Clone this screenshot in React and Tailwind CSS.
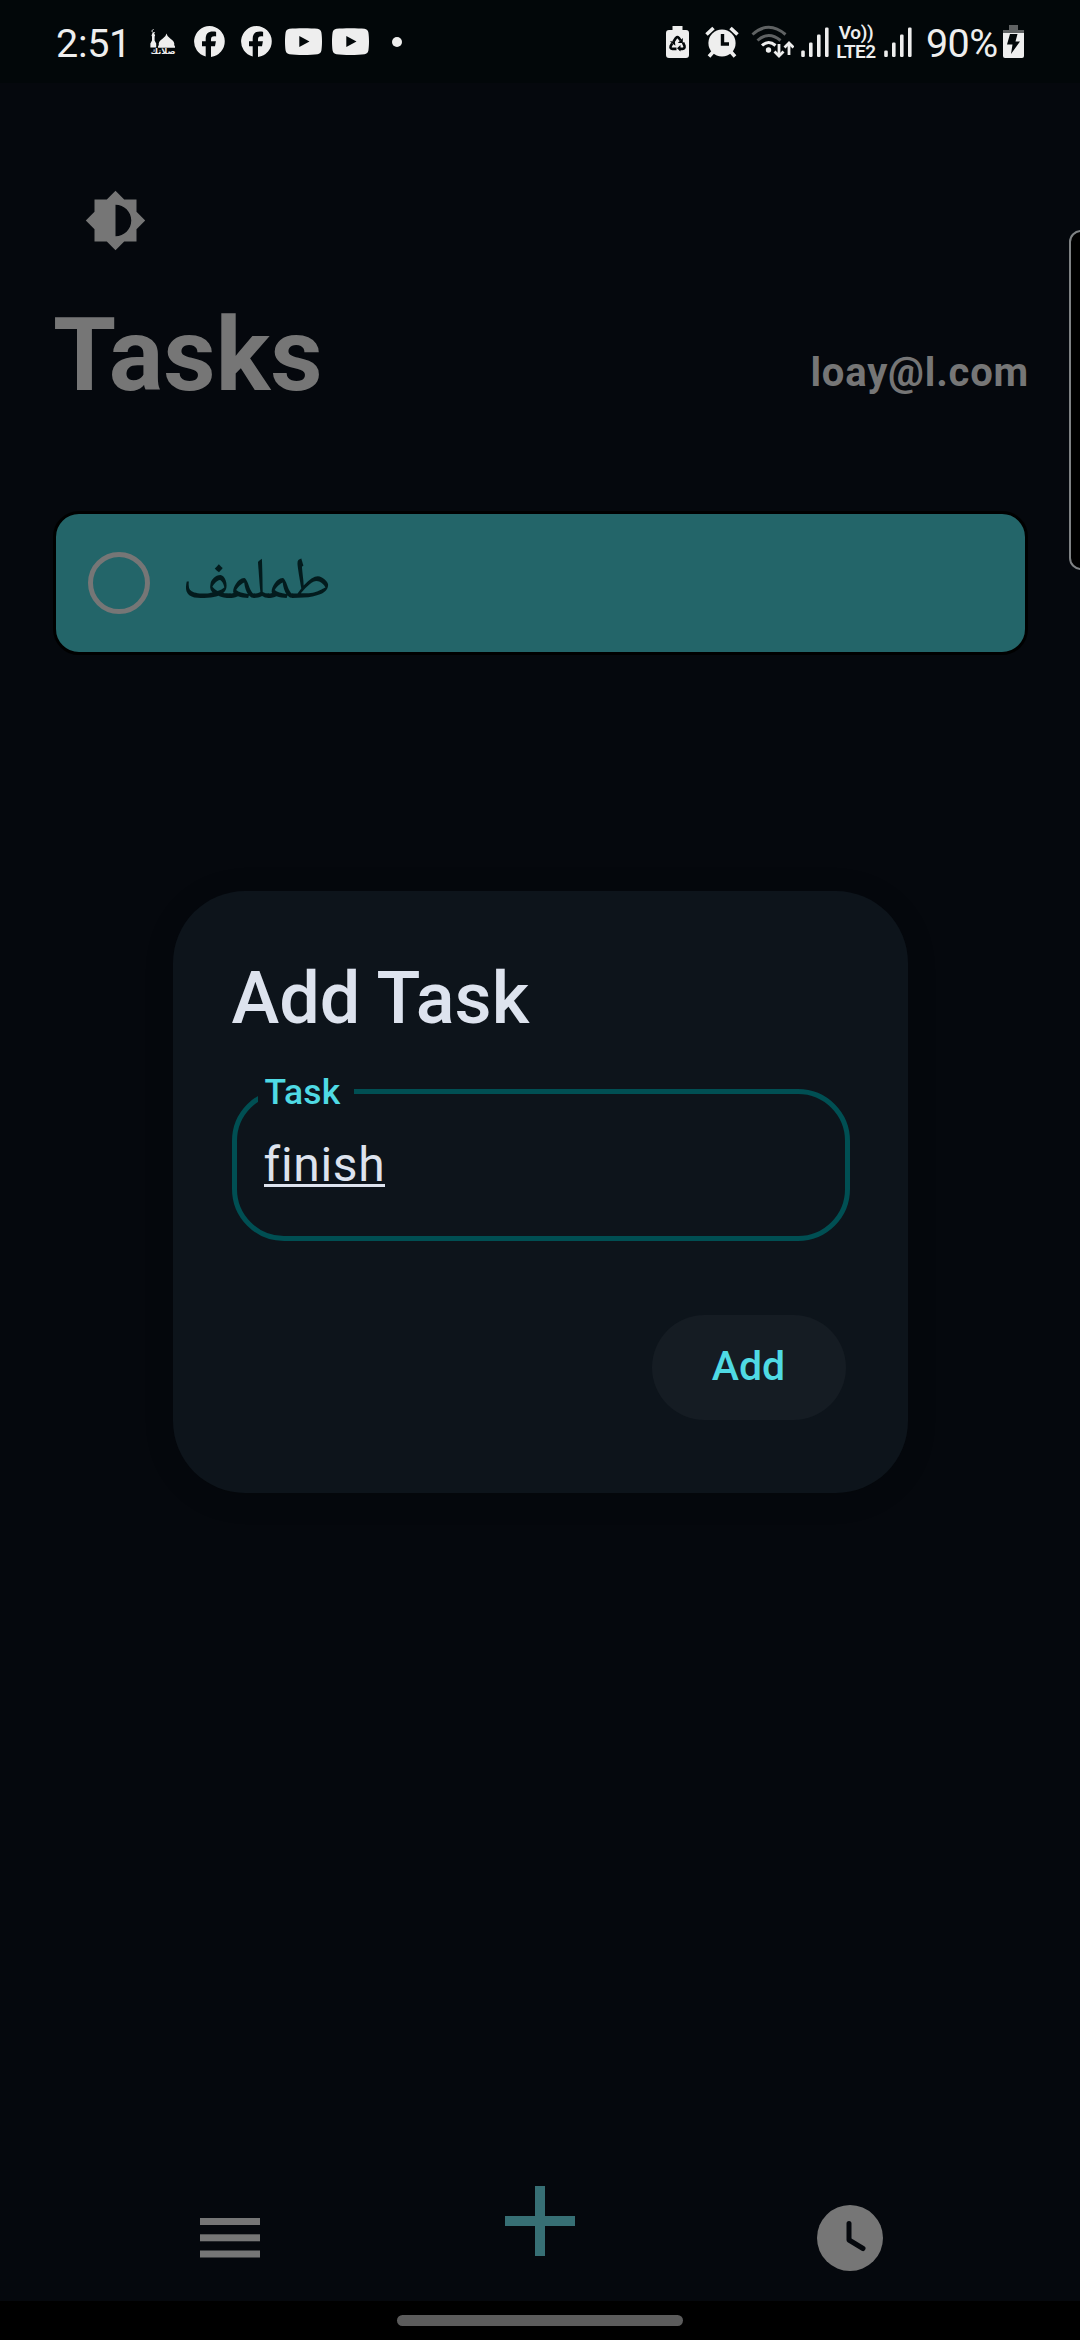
function Mosque() {
  return (
    <svg className="ml-[1px] h-[26px] w-[26px] shrink-0" viewBox="0 0 26 26" fill="#eeeeee">
      <path d="M3.500 0.500a1.600 1.600 0 1 0 1.500 2.500" fill="none" stroke="#eeeeee" strokeWidth="1" />
      <path d="M2.500 4h1.600l1 2.500-.5 1v4l1.600 3v4H.4v-4l1.600-3v-4l-.5-1z" />
      <path d="M16.500 4.500q.4 3 4 5.200 4.500 3 3.700 6.300l.8 1.500v1.200H8v-1.200l.8-1.500q-.8-3.300 3.700-6.300 3.600-2.200 4-5.200z" />
      <text x="13" y="24.500" fontSize="8" fontWeight="bold" textAnchor="middle" textLength="25" lengthAdjust="spacingAndGlyphs" fontFamily="DejaVu Sans, sans-serif">صلاتك</text>
    </svg>
  );
}

function Facebook({ className }) {
  return (
    <svg className={"h-[31px] w-[31px] shrink-0 " + className} viewBox="0 0 31 31">
      <path fill="#eeeeee" d="M15.500 0a15.500 15.500 0 0 0-3.800 30.500V20.200H8V15.200h3.700v-2.400c0-5 2.300-7.400 7.200-7.400 .9 0 2.500.2 3.200.4v4.600c-.4 0-1-.1-1.800-.1-2.400 0-3.300 1-3.300 3.300v1.600h4.900l-.9 5H17v10.700A15.500 15.500 0 0 0 15.500 0z" />
    </svg>
  );
}

function Youtube({ className }) {
  return (
    <svg className={"h-[27px] w-[37px] shrink-0 " + className} viewBox="0 0 37 27">
      <path fill="#eeeeee" fillRule="evenodd" d="M4.500.8C11 0 26 0 32.500.8c2.200.3 3.500 1.500 3.900 3.700 .8 5 .8 13 0 18 -.4 2.200-1.700 3.400-3.900 3.700 -6.500.9-21.500.9-28 0C2.300 25.900 1 24.700.6 22.500c-.8-5-.8-13 0-18C1 2.300 2.300 1.100 4.500.8zM14.300 8v11l10.200-5.500z" />
    </svg>
  );
}

function Signal({ className }) {
  return (
    <svg className={"h-[30px] w-[28px] shrink-0 " + className} viewBox="0 0 28 30" fill="#eeeeee">
      <rect x="0.200" y="23.500" width="3.600" height="6.500" rx="1.200" />
      <rect x="8" y="15.500" width="3.600" height="14.500" rx="1.200" />
      <rect x="16" y="7.500" width="3.600" height="22.500" rx="1.200" />
      <rect x="24" y="0.500" width="3.600" height="29.500" rx="1.200" />
    </svg>
  );
}

function StatusBar() {
  return (
    <header className="flex h-[83px] shrink-0 items-center bg-[#020709] pl-[56px] text-[#eeeeee]">
      <span className="mt-[4px] w-[93px] shrink-0 whitespace-nowrap text-[39.500px] leading-[40px] tracking-[-0.3px]">2:51</span>
      <Mosque />
      <Facebook className="ml-[18px]" />
      <Facebook className="ml-[16px]" />
      <Youtube className="ml-[13px]" />
      <Youtube className="ml-[10px]" />
      <span className="ml-[23px] size-[10px] shrink-0 rounded-full bg-[#eeeeee]" />

      <svg className="ml-[264px] h-[32px] w-[23px] shrink-0" viewBox="0 0 23 32">
        <path fill="#eeeeee" d="M6.500 0h10v4H20a3 3 0 0 1 3 3v22a3 3 0 0 1-3 3H3a3 3 0 0 1-3-3V7a3 3 0 0 1 3-3h3.500z" />
        <g fill="none" stroke="#020709" strokeWidth="2.600">
          <path d="M7.600 15.500l2.400-3.700q1.400-1.400 2.800 0l1.700 2.600" />
          <path d="M17 16.500l1.500 3.500q.5 2.700-2 2.900h-3.500" />
          <path d="M10.500 22.900H6.500q-2.600-.2-1.800-2.900l1.500-2.700" />
        </g>
        <path fill="#020709" d="M16.800 12v5h-5zM14.500 19v6.500l-3.500-3.200zM3.800 15.500l5-.5 .6 4.800z" />
      </svg>
      <svg className="ml-[16px] h-[32px] w-[34px] shrink-0" viewBox="0 0 34 32">
        <g stroke="#eeeeee" strokeWidth="3.600">
          <path d="M1.500 8.500L8.500 2M32.500 8.500L25.500 2M8 26l-4 4.500M26 26l4 4.500" />
        </g>
        <circle cx="17" cy="17" r="13.600" fill="#eeeeee" />
        <path d="M17.500 8v10h6.500" fill="none" stroke="#020709" strokeWidth="3.400" />
      </svg>
      <svg className="ml-[12px] h-[34px] w-[43px] shrink-0" viewBox="0 0 43 34" fill="none" strokeWidth="3">
        <path d="M1.500 9.500Q17.500-5 34.500 9.500" stroke="#5f6263" />
        <path d="M6.500 15.500Q17.500 5.500 29.500 15.500" stroke="#5f6263" />
        <path d="M11 20.500Q17.500 14.500 24.500 20.500" stroke="#eeeeee" />
        <circle cx="17.500" cy="25" r="2.700" fill="#eeeeee" />
        <path d="M28 19v11M38 30V20" stroke="#eeeeee" strokeWidth="2.800" />
        <path d="M23.500 26.500l4.500 4.500 4.500-4.500M33.500 22.500l4.500-4.500 4.500 4.500" stroke="#eeeeee" strokeWidth="2.800" />
      </svg>
      <Signal className="ml-[7px]" />
      <span className="ml-[6px] mt-[2px] flex h-[37px] w-[42px] shrink-0 flex-col items-center justify-between font-semibold">
        <span className="whitespace-nowrap text-[19px] leading-[17px] tracking-[-0.4px]">Vo))</span>
        <span className="whitespace-nowrap text-[19px] leading-[19px] tracking-[-0.5px]">LTE2</span>
      </span>
      <Signal className="ml-[7px]" />
      <span className="ml-[14px] mt-[4px] w-[77px] shrink-0 whitespace-nowrap text-[39.500px] leading-[40px] tracking-[-0.6px]">90%</span>
      <svg className="h-[33px] w-[21px] shrink-0" viewBox="0 0 21 33">
        <path fill="#5f6263" d="M6 0h9v5h6v3H0V5h6z" />
        <path fill="#eeeeee" d="M0 8h21v23a2 2 0 0 1-2 2H2a2 2 0 0 1-2-2z" />
        <path fill="#020709" d="M7 9h7.500l-2 7.500h4.500L8 29l1.500-9.500H4z" />
      </svg>
    </header>
  );
}

function TaskCard() {
  return (
    <div className="mx-[53px] mt-[110px] flex h-[144px] w-[975px] items-center rounded-[26px] border-[3px] border-black bg-[#236569] pl-[32px]">
      <span className="size-[62px] shrink-0 rounded-full border-[5px] border-[#767676]" />
      <span dir="rtl" className="ml-[32px] mt-[3px] whitespace-nowrap font-['Noto_Naskh_Arabic','DejaVu_Sans',sans-serif] text-[58.500px] leading-[60px] text-[#031b1d]">
        طملمف
      </span>
    </div>
  );
}

function AddTaskDialog() {
  return (
    <div className="absolute inset-0 flex items-start justify-center pt-[891px]">
      <section className="flex h-[602px] w-[735px] flex-col rounded-[72px] bg-[#0d141b] px-[59px] pt-[66px] shadow-[0_4px_30px_0px_rgba(0,0,0,0.15)]">
        <h2 className="whitespace-nowrap text-[72px] font-medium leading-[84px] text-[#dde3ee]">Add Task</h2>
        <div className="relative mt-[48px] flex h-[152px] w-[618px] shrink-0 items-center rounded-[52px] border-[5px] border-[#004f53] pl-[27px]">
          <span className="absolute left-[21px] top-[-23px] w-[96px] whitespace-nowrap bg-[#0d141b] pl-[7px] text-[35.500px] font-medium leading-[42px] tracking-[0.2px] text-[#4fdae4]">
            Task
          </span>
          <span className="mt-[3px] whitespace-nowrap border-b-[3px] border-[#dde3ee] text-[48px] leading-[38px] tracking-[0.7px] text-[#dde3ee]">
            finish
          </span>
        </div>
        <button className="mt-[74px] mr-[3px] h-[105px] w-[194px] shrink-0 self-end rounded-full bg-[#151c23] pb-[2px] text-[41px] font-medium text-[#4fdae4]">
          Add
        </button>
      </section>
    </div>
  );
}

function BottomNav() {
  return (
    <nav className="mt-auto grid h-[128px] grid-cols-3">
      <svg className="ml-[200px] mt-[45px] h-[40px] w-[60px]" viewBox="0 0 60 40" fill="#767676">
        <rect width="60" height="7" />
        <rect y="16.300" width="60" height="7" />
        <rect y="32.500" width="60" height="7" />
      </svg>
      <svg className="mt-[13px] size-[70px] justify-self-center" viewBox="0 0 70 70" fill="#376f74">
        <path d="M30 0h10v30h30v10H40v30H30V40H0V30h30z" />
      </svg>
      <svg className="ml-[97px] mt-[32px] size-[66px]" viewBox="0 0 66 66">
        <circle cx="33" cy="33" r="33" fill="#767676" />
        <path d="M32 18.500V35l14 8.500" fill="none" stroke="#05080d" strokeWidth="5" strokeLinecap="round" strokeLinejoin="round" />
      </svg>
    </nav>
  );
}

export default function App() {
  return (
    <div className="relative flex h-[2340px] w-[1080px] flex-col overflow-hidden bg-[#05080d] font-['Roboto',sans-serif]">
      <StatusBar />
      <svg className="ml-[84px] mt-[106px] size-[63px] shrink-0" viewBox="0 0 24 24" fill="#767676">
        <path d="M20 15.310L23.310 12 20 8.690V4h-4.690L12 .69 8.690 4H4v4.690L.69 12 4 15.310V20h4.690L12 23.310 15.310 20H20v-4.690zM12 18V6c3.310 0 6 2.690 6 6s-2.690 6-6 6z" />
      </svg>
      <div className="mt-[43px] flex h-[106px] shrink-0 items-baseline justify-between pl-[53px] pr-[51px] font-bold text-[#767676]">
        <h1 className="text-[102px] leading-[120px]">Tasks</h1>
        <span className="relative -top-1 text-[40px] leading-[48px] tracking-[0.800px]">loay@l.com</span>
      </div>
      <TaskCard />
      <BottomNav />
      <footer className="flex h-[39px] shrink-0 justify-center bg-black pt-[14px]">
        <span className="h-[11px] w-[286px] rounded-full bg-[#5c5c5c]" />
      </footer>
      <AddTaskDialog />
      <aside className="absolute right-[-20px] top-[230px] h-[340px] w-[31px] rounded-[12px] border-[2.500px] border-[#7f8284] bg-black" />
    </div>
  );
}
